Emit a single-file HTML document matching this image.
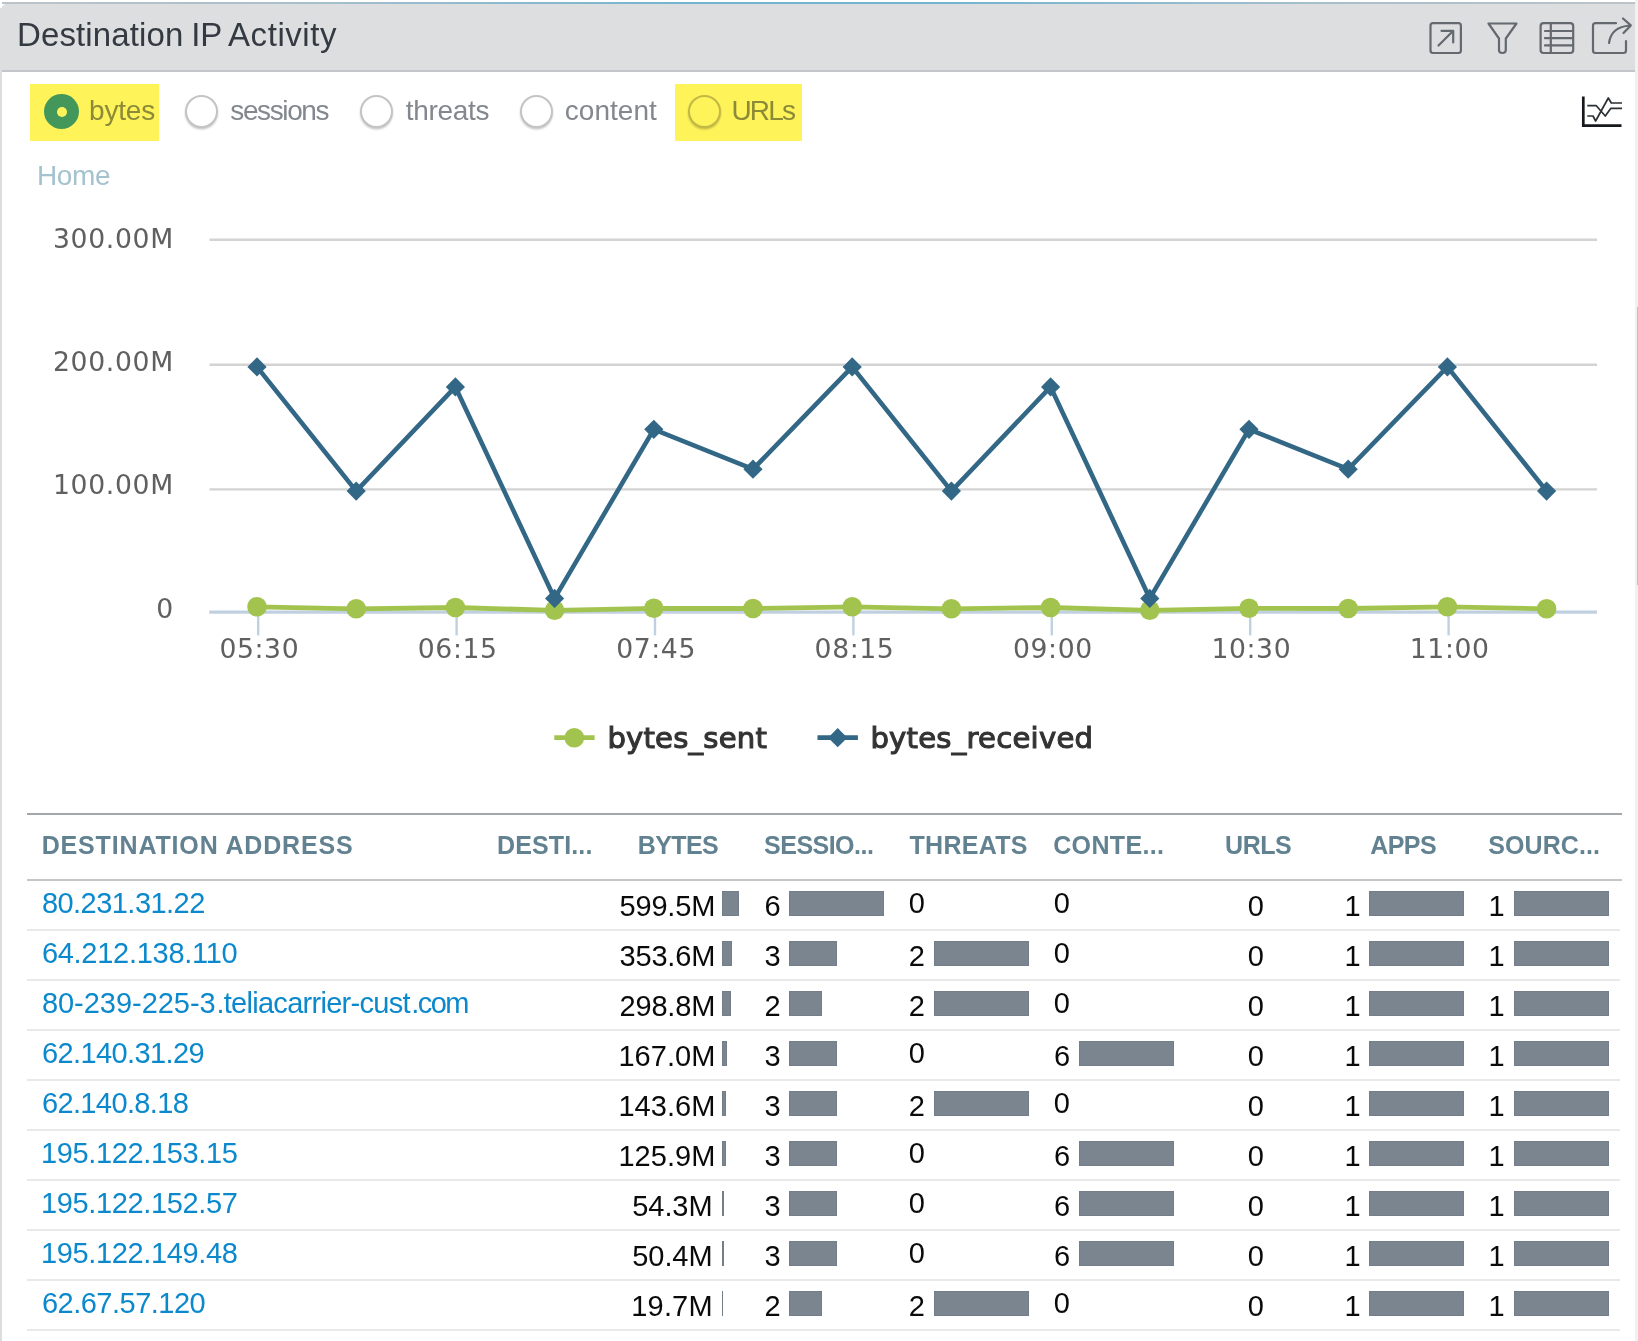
<!DOCTYPE html>
<html lang="en"><head><meta charset="utf-8"><title>Destination IP Activity</title>
<style>
html,body{margin:0;padding:0;background:#fff;}
body{width:1638px;height:1341px;position:relative;overflow:hidden;font-family:"Liberation Sans", sans-serif;}
#app{position:absolute;left:0;top:0;width:1638px;height:1341px;will-change:transform;background:#fff;}
.t,a.t{position:absolute;white-space:nowrap;text-decoration:none;margin:0;padding:0;}
.abs{position:absolute;}
.hl{position:absolute;top:83.9px;height:57px;background:#fff35a;}
.bar{position:absolute;height:24.8px;background:#7b858f;box-shadow:inset 0 0 0 1px #737e89;}
.rb{position:absolute;left:27px;width:1593.4px;height:2px;background:#e9e9e9;}
.radio{position:absolute;top:95px;width:29.2px;height:29.2px;border-radius:50%;border:2.4px solid #c4c4c4;background:#fff;box-shadow:0 1.5px 2px rgba(0,0,0,.22);box-sizing:content-box;}
.radio.on{top:94.1px;width:35px;height:35px;border:0;background:#43975b;box-shadow:none;}
.radio.on i{position:absolute;left:12.6px;top:12.8px;width:10.2px;height:10.2px;border-radius:50%;background:#fff35a;}
</style></head><body>
<div id="app">

<div class="abs" style="left:0;top:8px;width:2px;height:1341px;background:#dbdddf"></div>
<div class="abs" style="left:1635px;top:0;width:3px;height:1341px;background:#f1f1f1"></div>
<div class="abs" style="left:1636.8px;top:307px;width:2px;height:278px;background:#c1c1c1"></div>
<header>
<div class="abs" style="left:0;top:4px;width:1635px;height:66px;background:#dcdee0;border-top-left-radius:6px 10px;"></div>
<div class="abs" style="left:2px;top:2px;width:1633px;height:2px;background:linear-gradient(to right,#bcc3c8 0%,#a9bfcc 18%,#74b4cf 42%,#74b4cf 58%,#a9bfcc 82%,#bcc3c8 100%)"></div>
<div class="abs" style="left:2px;top:70px;width:1633px;height:2px;background:#c2c6ca"></div>
<h1 style="margin:0;font-weight:400"><span class="t title" style="left:17.00px;top:15.00px;font-size:33px;line-height:40px;letter-spacing:0.126px;color:#343a41;">Destination</span>
<span class="t title" style="left:191.20px;top:15.00px;font-size:33px;line-height:40px;letter-spacing:0.000px;color:#343a41;">IP</span>
<span class="t title" style="left:228.00px;top:15.00px;font-size:33px;line-height:40px;letter-spacing:0.570px;color:#343a41;">Activity</span></h1>
<svg class="abs" style="left:1420px;top:10px" width="215" height="55" viewBox="1420 10 215 55" fill="none" stroke="#63696f" stroke-width="2.2" stroke-linecap="round" stroke-linejoin="round">
<rect x="1430.5" y="23.2" width="30.4" height="29.8" rx="2.5"/>
<path d="M1438.5 45.5 L1452.5 31.5 M1441.5 30.8 H1453.2 V42.5"/>
<path d="M1488.5 23.5 H1516.5 L1505.8 38.5 V50 Q1505.8 53 1502.3 53 Q1499 53 1499 50 V38.5 Z"/>
<rect x="1540.6" y="23.2" width="32.6" height="29.8" rx="3"/>
<path d="M1550.8 23.2 V53 M1545 31 H1573 M1545 38.2 H1573 M1545 45.4 H1573"/>
<path d="M1616 23.2 H1595.5 Q1593 23.2 1593 25.7 V50.5 Q1593 53 1595.5 53 H1623.5 Q1626 53 1626 50.5 V41"/>
<path d="M1609 43 Q1611 27 1630 25.5 M1623 18.5 L1630.8 25.4 L1623.5 33"/>
</svg>
</header>
<nav>
<label>
<span class="hl" style="left:30.3px;width:128.6px"></span>
<span class="radio on" style="left:44.3px"><i></i></span>
<span class="t" style="left:89.02px;top:94.00px;font-size:28px;line-height:34px;letter-spacing:-0.191px;color:#8b8a38;">bytes</span>
</label>
<label>
<span class="radio" style="left:185.0px"></span>
<span class="t" style="left:230.30px;top:94.00px;font-size:28px;line-height:34px;letter-spacing:-1.391px;color:#82888d;">sessions</span>
</label>
<label>
<span class="radio" style="left:359.8px"></span>
<span class="t" style="left:405.70px;top:94.00px;font-size:28px;line-height:34px;letter-spacing:-0.317px;color:#82888d;">threats</span>
</label>
<label>
<span class="radio" style="left:519.8px"></span>
<span class="t" style="left:564.80px;top:94.00px;font-size:28px;line-height:34px;letter-spacing:0.022px;color:#82888d;">content</span>
</label>
<label>
<span class="hl" style="left:675.2px;width:126.7px"></span>
<span class="radio" style="left:687.7px;background:#fff35a;border-color:#c2b945"></span>
<span class="t" style="left:731.50px;top:94.00px;font-size:28px;line-height:34px;letter-spacing:-1.871px;color:#8b8a38;">URLs</span>
</label>
</nav>
<svg class="abs" style="left:1575px;top:90px" width="55" height="45" viewBox="1575 90 55 45" fill="none" stroke="#15191d" stroke-linejoin="round" stroke-linecap="butt">
<path d="M1583.3 96.6 V125.6 H1621.5" stroke-width="2.7" stroke-linejoin="miter"/>
<path d="M1587.3 105.7 H1596.3 L1605.3 116 L1610.7 108.4 H1622" stroke-width="1.7" stroke="#2b3035"/>
<path d="M1587.3 116 H1593 L1595.6 121 L1608.3 98 L1611.3 103 H1622" stroke-width="1.7" stroke="#2b3035"/>
</svg>
<a class="t" style="left:37.00px;top:159.00px;font-size:28px;line-height:34px;letter-spacing:-0.406px;color:#a4c3cf;">Home</a>
<svg class="abs" style="left:0;top:200px" width="1635" height="600" viewBox="0 200 1635 600" font-family='"DejaVu Sans", "Liberation Sans", sans-serif'>
<path d="M209.5 239.7 H1597" stroke="#d3d3d3" stroke-width="2.4" fill="none"/>
<path d="M209.5 364.7 H1597" stroke="#d3d3d3" stroke-width="2.4" fill="none"/>
<path d="M209.5 489.4 H1597" stroke="#d3d3d3" stroke-width="2.4" fill="none"/>
<path d="M209.3 612.1 H1597" stroke="#c0d0e0" stroke-width="3.3" fill="none"/>
<path d="M258.2 613 V635.4" stroke="#c0d0e0" stroke-width="2.4" fill="none"/>
<path d="M456.6 613 V635.4" stroke="#c0d0e0" stroke-width="2.4" fill="none"/>
<path d="M655.0 613 V635.4" stroke="#c0d0e0" stroke-width="2.4" fill="none"/>
<path d="M853.4 613 V635.4" stroke="#c0d0e0" stroke-width="2.4" fill="none"/>
<path d="M1051.8 613 V635.4" stroke="#c0d0e0" stroke-width="2.4" fill="none"/>
<path d="M1250.2 613 V635.4" stroke="#c0d0e0" stroke-width="2.4" fill="none"/>
<path d="M1448.6 613 V635.4" stroke="#c0d0e0" stroke-width="2.4" fill="none"/>
<path d="M257.0 606.8 L356.2 608.8 L455.4 607.5 L554.6 610.3 L653.8 608.3 L753.0 608.5 L852.2 606.8 L951.4 608.8 L1050.6 607.5 L1149.8 610.3 L1249.0 608.3 L1348.2 608.5 L1447.4 606.8 L1546.6 608.8" stroke="#a2c44f" stroke-width="4.8" fill="none" stroke-linejoin="round" stroke-linecap="round"/>
<path d="M257.0 366.9 L356.2 491.1 L455.4 386.9 L554.6 598.4 L653.8 429.3 L753.0 469.2 L852.2 366.9 L951.4 491.1 L1050.6 386.9 L1149.8 598.4 L1249.0 429.3 L1348.2 469.2 L1447.4 366.9 L1546.6 491.1" stroke="#336786" stroke-width="4.6" fill="none" stroke-linejoin="round" stroke-linecap="round"/>
<circle cx="257.0" cy="606.8" r="9.8" fill="#a2c44f"/>
<circle cx="356.2" cy="608.8" r="9.8" fill="#a2c44f"/>
<circle cx="455.4" cy="607.5" r="9.8" fill="#a2c44f"/>
<circle cx="554.6" cy="610.3" r="9.8" fill="#a2c44f"/>
<circle cx="653.8" cy="608.3" r="9.8" fill="#a2c44f"/>
<circle cx="753.0" cy="608.5" r="9.8" fill="#a2c44f"/>
<circle cx="852.2" cy="606.8" r="9.8" fill="#a2c44f"/>
<circle cx="951.4" cy="608.8" r="9.8" fill="#a2c44f"/>
<circle cx="1050.6" cy="607.5" r="9.8" fill="#a2c44f"/>
<circle cx="1149.8" cy="610.3" r="9.8" fill="#a2c44f"/>
<circle cx="1249.0" cy="608.3" r="9.8" fill="#a2c44f"/>
<circle cx="1348.2" cy="608.5" r="9.8" fill="#a2c44f"/>
<circle cx="1447.4" cy="606.8" r="9.8" fill="#a2c44f"/>
<circle cx="1546.6" cy="608.8" r="9.8" fill="#a2c44f"/>
<path d="M257.0 357.3 L266.6 366.9 L257.0 376.5 L247.4 366.9Z" fill="#336786"/>
<path d="M356.2 481.5 L365.8 491.1 L356.2 500.7 L346.6 491.1Z" fill="#336786"/>
<path d="M455.4 377.3 L465.0 386.9 L455.4 396.5 L445.8 386.9Z" fill="#336786"/>
<path d="M554.6 588.8 L564.2 598.4 L554.6 608.0 L545.0 598.4Z" fill="#336786"/>
<path d="M653.8 419.7 L663.4 429.3 L653.8 438.9 L644.2 429.3Z" fill="#336786"/>
<path d="M753.0 459.6 L762.6 469.2 L753.0 478.8 L743.4 469.2Z" fill="#336786"/>
<path d="M852.2 357.3 L861.8 366.9 L852.2 376.5 L842.6 366.9Z" fill="#336786"/>
<path d="M951.4 481.5 L961.0 491.1 L951.4 500.7 L941.8 491.1Z" fill="#336786"/>
<path d="M1050.6 377.3 L1060.2 386.9 L1050.6 396.5 L1041.0 386.9Z" fill="#336786"/>
<path d="M1149.8 588.8 L1159.4 598.4 L1149.8 608.0 L1140.2 598.4Z" fill="#336786"/>
<path d="M1249.0 419.7 L1258.6 429.3 L1249.0 438.9 L1239.4 429.3Z" fill="#336786"/>
<path d="M1348.2 459.6 L1357.8 469.2 L1348.2 478.8 L1338.6 469.2Z" fill="#336786"/>
<path d="M1447.4 357.3 L1457.0 366.9 L1447.4 376.5 L1437.8 366.9Z" fill="#336786"/>
<path d="M1546.6 481.5 L1556.2 491.1 L1546.6 500.7 L1537.0 491.1Z" fill="#336786"/>
<text x="173.8" y="247.5" text-anchor="end" font-size="26.67" letter-spacing="0.65" fill="#606060">300.00M</text>
<text x="173.8" y="371" text-anchor="end" font-size="26.67" letter-spacing="0.65" fill="#606060">200.00M</text>
<text x="173.8" y="493.8" text-anchor="end" font-size="26.67" letter-spacing="0.65" fill="#606060">100.00M</text>
<text x="173.8" y="617.6" text-anchor="end" font-size="26.67" letter-spacing="0.65" fill="#606060">0</text>
<text x="259.3" y="657.6" text-anchor="middle" font-size="26.67" letter-spacing="0.6" fill="#606060">05:30</text>
<text x="457.7" y="657.6" text-anchor="middle" font-size="26.67" letter-spacing="0.6" fill="#606060">06:15</text>
<text x="656.1" y="657.6" text-anchor="middle" font-size="26.67" letter-spacing="0.6" fill="#606060">07:45</text>
<text x="854.5" y="657.6" text-anchor="middle" font-size="26.67" letter-spacing="0.6" fill="#606060">08:15</text>
<text x="1052.9" y="657.6" text-anchor="middle" font-size="26.67" letter-spacing="0.6" fill="#606060">09:00</text>
<text x="1251.3" y="657.6" text-anchor="middle" font-size="26.67" letter-spacing="0.6" fill="#606060">10:30</text>
<text x="1449.7" y="657.6" text-anchor="middle" font-size="26.67" letter-spacing="0.6" fill="#606060">11:00</text>
<path d="M554.3 737.7 H594.6" stroke="#a2c44f" stroke-width="4.8"/><circle cx="574.3" cy="737.7" r="9.8" fill="#a2c44f"/>
<path d="M817.5 737.7 H857.9" stroke="#336786" stroke-width="4.8"/><path d="M837.7 728.1 L847.3000000000001 737.7 L837.7 747.3000000000001 L828.1 737.7Z" fill="#336786"/>
<text x="607.4" y="747.5" font-size="29.1" fill="#333" stroke="#333" stroke-width="1.1" letter-spacing="0.2">bytes_sent</text>
<text x="870.4" y="747.5" font-size="29.1" fill="#333" stroke="#333" stroke-width="1.1" letter-spacing="0.24">bytes_received</text>
</svg>
<section>
<div class="abs" style="left:27px;top:812.9px;width:1595px;height:2px;background:#a3a7aa"></div>
<div class="thead"><span class="t th" style="left:41.70px;top:830.00px;font-size:25px;line-height:30px;letter-spacing:0.841px;color:#628291;font-weight:700;">DESTINATION ADDRESS</span>
<span class="t th" style="left:497.00px;top:830.00px;font-size:25px;line-height:30px;letter-spacing:0.127px;color:#628291;font-weight:700;">DESTI...</span>
<span class="t th" style="left:637.80px;top:830.00px;font-size:25px;line-height:30px;letter-spacing:-0.619px;color:#628291;font-weight:700;">BYTES</span>
<span class="t th" style="left:764.10px;top:830.00px;font-size:25px;line-height:30px;letter-spacing:-0.523px;color:#628291;font-weight:700;">SESSIO...</span>
<span class="t th" style="left:909.50px;top:830.00px;font-size:25px;line-height:30px;letter-spacing:0.279px;color:#628291;font-weight:700;">THREATS</span>
<span class="t th" style="left:1053.20px;top:830.00px;font-size:25px;line-height:30px;letter-spacing:0.344px;color:#628291;font-weight:700;">CONTE...</span>
<span class="t th" style="left:1225.10px;top:830.00px;font-size:25px;line-height:30px;letter-spacing:-0.493px;color:#628291;font-weight:700;">URLS</span>
<span class="t th" style="left:1370.20px;top:830.00px;font-size:25px;line-height:30px;letter-spacing:-0.568px;color:#628291;font-weight:700;">APPS</span>
<span class="t th" style="left:1488.20px;top:830.00px;font-size:25px;line-height:30px;letter-spacing:0.101px;color:#628291;font-weight:700;">SOURC...</span></div>
<div class="abs" style="left:27px;top:878.6px;width:1595px;height:2px;background:#c6c6c6"></div>
<div class="row">
<a class="t" style="left:41.90px;top:886.00px;font-size:29px;line-height:35px;letter-spacing:-0.536px;color:#0b89cc;">80.231.31.22</a>
<span class="t" style="left:619.40px;top:889.00px;font-size:29px;line-height:35px;letter-spacing:-0.134px;color:#0a0a0a;">599.5M</span>
<span class="t" style="left:764.60px;top:889.00px;font-size:29px;line-height:35px;letter-spacing:0.000px;color:#0a0a0a;">6</span>
<span class="t" style="left:908.80px;top:886.00px;font-size:29px;line-height:35px;letter-spacing:0.000px;color:#0a0a0a;">0</span>
<span class="t" style="left:1053.80px;top:886.00px;font-size:29px;line-height:35px;letter-spacing:0.000px;color:#0a0a0a;">0</span>
<span class="t" style="left:1247.70px;top:889.00px;font-size:29px;line-height:35px;letter-spacing:0.000px;color:#0a0a0a;">0</span>
<span class="t" style="left:1344.40px;top:889.00px;font-size:29px;line-height:35px;letter-spacing:0.000px;color:#0a0a0a;">1</span>
<span class="t" style="left:1488.40px;top:889.00px;font-size:29px;line-height:35px;letter-spacing:0.000px;color:#0a0a0a;">1</span>
<i class="bar" style="left:722px;top:890.8px;width:16.8px"></i>
<i class="bar" style="left:789px;top:890.8px;width:95px"></i>
<i class="bar" style="left:1369px;top:890.8px;width:95px"></i>
<i class="bar" style="left:1514px;top:890.8px;width:95px"></i>
<div class="rb" style="top:928.7px"></div>
</div>
<div class="row">
<a class="t" style="left:41.90px;top:936.00px;font-size:29px;line-height:35px;letter-spacing:-0.277px;color:#0b89cc;">64.212.138.110</a>
<span class="t" style="left:619.40px;top:939.00px;font-size:29px;line-height:35px;letter-spacing:-0.134px;color:#0a0a0a;">353.6M</span>
<span class="t" style="left:764.60px;top:939.00px;font-size:29px;line-height:35px;letter-spacing:0.000px;color:#0a0a0a;">3</span>
<span class="t" style="left:908.80px;top:939.00px;font-size:29px;line-height:35px;letter-spacing:0.000px;color:#0a0a0a;">2</span>
<span class="t" style="left:1053.80px;top:936.00px;font-size:29px;line-height:35px;letter-spacing:0.000px;color:#0a0a0a;">0</span>
<span class="t" style="left:1247.70px;top:939.00px;font-size:29px;line-height:35px;letter-spacing:0.000px;color:#0a0a0a;">0</span>
<span class="t" style="left:1344.40px;top:939.00px;font-size:29px;line-height:35px;letter-spacing:0.000px;color:#0a0a0a;">1</span>
<span class="t" style="left:1488.40px;top:939.00px;font-size:29px;line-height:35px;letter-spacing:0.000px;color:#0a0a0a;">1</span>
<i class="bar" style="left:722px;top:940.8px;width:9.9px"></i>
<i class="bar" style="left:789px;top:940.8px;width:48px"></i>
<i class="bar" style="left:934px;top:940.8px;width:95px"></i>
<i class="bar" style="left:1369px;top:940.8px;width:95px"></i>
<i class="bar" style="left:1514px;top:940.8px;width:95px"></i>
<div class="rb" style="top:978.7px"></div>
</div>
<div class="row">
<a><span class="t" style="left:41.90px;top:986.00px;font-size:29px;line-height:35px;letter-spacing:-0.027px;color:#0b89cc;">80-239-225-3</span><span class="t" style="left:216.40px;top:986.00px;font-size:29px;line-height:35px;letter-spacing:-0.713px;color:#0b89cc;">.teliacarrier-cust</span><span class="t" style="left:411.30px;top:986.00px;font-size:29px;line-height:35px;letter-spacing:-1.595px;color:#0b89cc;">.com</span></a>
<span class="t" style="left:619.40px;top:989.00px;font-size:29px;line-height:35px;letter-spacing:-0.134px;color:#0a0a0a;">298.8M</span>
<span class="t" style="left:764.60px;top:989.00px;font-size:29px;line-height:35px;letter-spacing:0.000px;color:#0a0a0a;">2</span>
<span class="t" style="left:908.80px;top:989.00px;font-size:29px;line-height:35px;letter-spacing:0.000px;color:#0a0a0a;">2</span>
<span class="t" style="left:1053.80px;top:986.00px;font-size:29px;line-height:35px;letter-spacing:0.000px;color:#0a0a0a;">0</span>
<span class="t" style="left:1247.70px;top:989.00px;font-size:29px;line-height:35px;letter-spacing:0.000px;color:#0a0a0a;">0</span>
<span class="t" style="left:1344.40px;top:989.00px;font-size:29px;line-height:35px;letter-spacing:0.000px;color:#0a0a0a;">1</span>
<span class="t" style="left:1488.40px;top:989.00px;font-size:29px;line-height:35px;letter-spacing:0.000px;color:#0a0a0a;">1</span>
<i class="bar" style="left:722px;top:990.8px;width:8.9px"></i>
<i class="bar" style="left:789px;top:990.8px;width:33px"></i>
<i class="bar" style="left:934px;top:990.8px;width:95px"></i>
<i class="bar" style="left:1369px;top:990.8px;width:95px"></i>
<i class="bar" style="left:1514px;top:990.8px;width:95px"></i>
<div class="rb" style="top:1028.7px"></div>
</div>
<div class="row">
<a class="t" style="left:41.90px;top:1036.00px;font-size:29px;line-height:35px;letter-spacing:-0.591px;color:#0b89cc;">62.140.31.29</a>
<span class="t" style="left:618.40px;top:1039.00px;font-size:29px;line-height:35px;letter-spacing:0.066px;color:#0a0a0a;">167.0M</span>
<span class="t" style="left:764.60px;top:1039.00px;font-size:29px;line-height:35px;letter-spacing:0.000px;color:#0a0a0a;">3</span>
<span class="t" style="left:908.80px;top:1036.00px;font-size:29px;line-height:35px;letter-spacing:0.000px;color:#0a0a0a;">0</span>
<span class="t" style="left:1054.00px;top:1039.00px;font-size:29px;line-height:35px;letter-spacing:0.000px;color:#0a0a0a;">6</span>
<span class="t" style="left:1247.70px;top:1039.00px;font-size:29px;line-height:35px;letter-spacing:0.000px;color:#0a0a0a;">0</span>
<span class="t" style="left:1344.40px;top:1039.00px;font-size:29px;line-height:35px;letter-spacing:0.000px;color:#0a0a0a;">1</span>
<span class="t" style="left:1488.40px;top:1039.00px;font-size:29px;line-height:35px;letter-spacing:0.000px;color:#0a0a0a;">1</span>
<i class="bar" style="left:722px;top:1040.8px;width:4.8px"></i>
<i class="bar" style="left:789px;top:1040.8px;width:48px"></i>
<i class="bar" style="left:1079px;top:1040.8px;width:95px"></i>
<i class="bar" style="left:1369px;top:1040.8px;width:95px"></i>
<i class="bar" style="left:1514px;top:1040.8px;width:95px"></i>
<div class="rb" style="top:1078.7px"></div>
</div>
<div class="row">
<a class="t" style="left:41.90px;top:1086.00px;font-size:29px;line-height:35px;letter-spacing:-0.617px;color:#0b89cc;">62.140.8.18</a>
<span class="t" style="left:618.40px;top:1089.00px;font-size:29px;line-height:35px;letter-spacing:0.066px;color:#0a0a0a;">143.6M</span>
<span class="t" style="left:764.60px;top:1089.00px;font-size:29px;line-height:35px;letter-spacing:0.000px;color:#0a0a0a;">3</span>
<span class="t" style="left:908.80px;top:1089.00px;font-size:29px;line-height:35px;letter-spacing:0.000px;color:#0a0a0a;">2</span>
<span class="t" style="left:1053.80px;top:1086.00px;font-size:29px;line-height:35px;letter-spacing:0.000px;color:#0a0a0a;">0</span>
<span class="t" style="left:1247.70px;top:1089.00px;font-size:29px;line-height:35px;letter-spacing:0.000px;color:#0a0a0a;">0</span>
<span class="t" style="left:1344.40px;top:1089.00px;font-size:29px;line-height:35px;letter-spacing:0.000px;color:#0a0a0a;">1</span>
<span class="t" style="left:1488.40px;top:1089.00px;font-size:29px;line-height:35px;letter-spacing:0.000px;color:#0a0a0a;">1</span>
<i class="bar" style="left:722px;top:1090.8px;width:3.8px"></i>
<i class="bar" style="left:789px;top:1090.8px;width:48px"></i>
<i class="bar" style="left:934px;top:1090.8px;width:95px"></i>
<i class="bar" style="left:1369px;top:1090.8px;width:95px"></i>
<i class="bar" style="left:1514px;top:1090.8px;width:95px"></i>
<div class="rb" style="top:1128.7px"></div>
</div>
<div class="row">
<a class="t" style="left:40.90px;top:1136.00px;font-size:29px;line-height:35px;letter-spacing:-0.350px;color:#0b89cc;">195.122.153.15</a>
<span class="t" style="left:618.40px;top:1139.00px;font-size:29px;line-height:35px;letter-spacing:0.066px;color:#0a0a0a;">125.9M</span>
<span class="t" style="left:764.60px;top:1139.00px;font-size:29px;line-height:35px;letter-spacing:0.000px;color:#0a0a0a;">3</span>
<span class="t" style="left:908.80px;top:1136.00px;font-size:29px;line-height:35px;letter-spacing:0.000px;color:#0a0a0a;">0</span>
<span class="t" style="left:1054.00px;top:1139.00px;font-size:29px;line-height:35px;letter-spacing:0.000px;color:#0a0a0a;">6</span>
<span class="t" style="left:1247.70px;top:1139.00px;font-size:29px;line-height:35px;letter-spacing:0.000px;color:#0a0a0a;">0</span>
<span class="t" style="left:1344.40px;top:1139.00px;font-size:29px;line-height:35px;letter-spacing:0.000px;color:#0a0a0a;">1</span>
<span class="t" style="left:1488.40px;top:1139.00px;font-size:29px;line-height:35px;letter-spacing:0.000px;color:#0a0a0a;">1</span>
<i class="bar" style="left:722px;top:1140.8px;width:3.8px"></i>
<i class="bar" style="left:789px;top:1140.8px;width:48px"></i>
<i class="bar" style="left:1079px;top:1140.8px;width:95px"></i>
<i class="bar" style="left:1369px;top:1140.8px;width:95px"></i>
<i class="bar" style="left:1514px;top:1140.8px;width:95px"></i>
<div class="rb" style="top:1178.7px"></div>
</div>
<div class="row">
<a class="t" style="left:40.90px;top:1186.00px;font-size:29px;line-height:35px;letter-spacing:-0.350px;color:#0b89cc;">195.122.152.57</a>
<span class="t" style="left:632.30px;top:1189.00px;font-size:29px;line-height:35px;letter-spacing:-0.086px;color:#0a0a0a;">54.3M</span>
<span class="t" style="left:764.60px;top:1189.00px;font-size:29px;line-height:35px;letter-spacing:0.000px;color:#0a0a0a;">3</span>
<span class="t" style="left:908.80px;top:1186.00px;font-size:29px;line-height:35px;letter-spacing:0.000px;color:#0a0a0a;">0</span>
<span class="t" style="left:1054.00px;top:1189.00px;font-size:29px;line-height:35px;letter-spacing:0.000px;color:#0a0a0a;">6</span>
<span class="t" style="left:1247.70px;top:1189.00px;font-size:29px;line-height:35px;letter-spacing:0.000px;color:#0a0a0a;">0</span>
<span class="t" style="left:1344.40px;top:1189.00px;font-size:29px;line-height:35px;letter-spacing:0.000px;color:#0a0a0a;">1</span>
<span class="t" style="left:1488.40px;top:1189.00px;font-size:29px;line-height:35px;letter-spacing:0.000px;color:#0a0a0a;">1</span>
<i class="bar" style="left:722px;top:1190.8px;width:1.7px"></i>
<i class="bar" style="left:789px;top:1190.8px;width:48px"></i>
<i class="bar" style="left:1079px;top:1190.8px;width:95px"></i>
<i class="bar" style="left:1369px;top:1190.8px;width:95px"></i>
<i class="bar" style="left:1514px;top:1190.8px;width:95px"></i>
<div class="rb" style="top:1228.7px"></div>
</div>
<div class="row">
<a class="t" style="left:40.90px;top:1236.00px;font-size:29px;line-height:35px;letter-spacing:-0.350px;color:#0b89cc;">195.122.149.48</a>
<span class="t" style="left:632.30px;top:1239.00px;font-size:29px;line-height:35px;letter-spacing:-0.086px;color:#0a0a0a;">50.4M</span>
<span class="t" style="left:764.60px;top:1239.00px;font-size:29px;line-height:35px;letter-spacing:0.000px;color:#0a0a0a;">3</span>
<span class="t" style="left:908.80px;top:1236.00px;font-size:29px;line-height:35px;letter-spacing:0.000px;color:#0a0a0a;">0</span>
<span class="t" style="left:1054.00px;top:1239.00px;font-size:29px;line-height:35px;letter-spacing:0.000px;color:#0a0a0a;">6</span>
<span class="t" style="left:1247.70px;top:1239.00px;font-size:29px;line-height:35px;letter-spacing:0.000px;color:#0a0a0a;">0</span>
<span class="t" style="left:1344.40px;top:1239.00px;font-size:29px;line-height:35px;letter-spacing:0.000px;color:#0a0a0a;">1</span>
<span class="t" style="left:1488.40px;top:1239.00px;font-size:29px;line-height:35px;letter-spacing:0.000px;color:#0a0a0a;">1</span>
<i class="bar" style="left:722px;top:1240.8px;width:1.7px"></i>
<i class="bar" style="left:789px;top:1240.8px;width:48px"></i>
<i class="bar" style="left:1079px;top:1240.8px;width:95px"></i>
<i class="bar" style="left:1369px;top:1240.8px;width:95px"></i>
<i class="bar" style="left:1514px;top:1240.8px;width:95px"></i>
<div class="rb" style="top:1278.7px"></div>
</div>
<div class="row">
<a class="t" style="left:41.90px;top:1286.00px;font-size:29px;line-height:35px;letter-spacing:-0.500px;color:#0b89cc;">62.67.57.120</a>
<span class="t" style="left:631.30px;top:1289.00px;font-size:29px;line-height:35px;letter-spacing:0.164px;color:#0a0a0a;">19.7M</span>
<span class="t" style="left:764.60px;top:1289.00px;font-size:29px;line-height:35px;letter-spacing:0.000px;color:#0a0a0a;">2</span>
<span class="t" style="left:908.80px;top:1289.00px;font-size:29px;line-height:35px;letter-spacing:0.000px;color:#0a0a0a;">2</span>
<span class="t" style="left:1053.80px;top:1286.00px;font-size:29px;line-height:35px;letter-spacing:0.000px;color:#0a0a0a;">0</span>
<span class="t" style="left:1247.70px;top:1289.00px;font-size:29px;line-height:35px;letter-spacing:0.000px;color:#0a0a0a;">0</span>
<span class="t" style="left:1344.40px;top:1289.00px;font-size:29px;line-height:35px;letter-spacing:0.000px;color:#0a0a0a;">1</span>
<span class="t" style="left:1488.40px;top:1289.00px;font-size:29px;line-height:35px;letter-spacing:0.000px;color:#0a0a0a;">1</span>
<i class="bar" style="left:722px;top:1290.8px;width:1.0px"></i>
<i class="bar" style="left:789px;top:1290.8px;width:33px"></i>
<i class="bar" style="left:934px;top:1290.8px;width:95px"></i>
<i class="bar" style="left:1369px;top:1290.8px;width:95px"></i>
<i class="bar" style="left:1514px;top:1290.8px;width:95px"></i>
<div class="rb" style="top:1328.7px"></div>
</div>
</section>
</div></body></html>
